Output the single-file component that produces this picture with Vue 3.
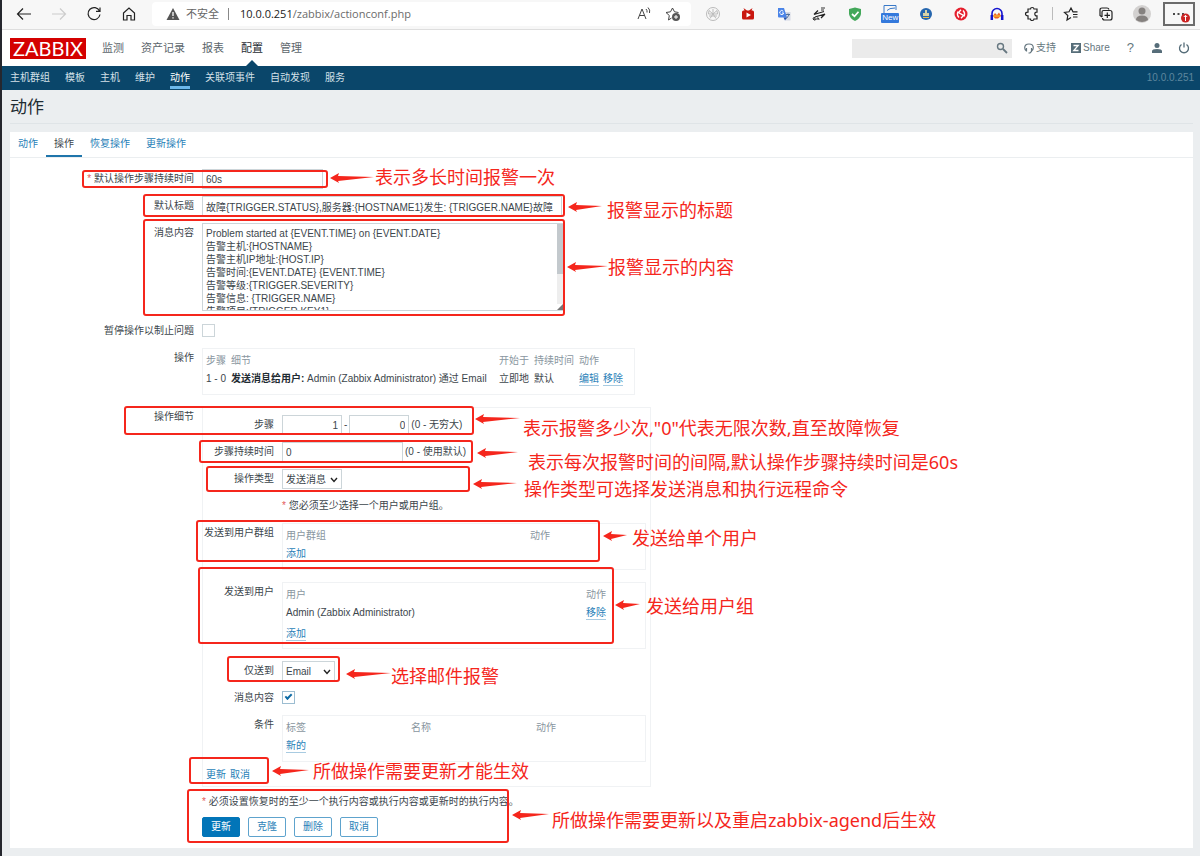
<template>
  <div class="page">
    <header class="browser">
      <div class="browser-nav">
        <button class="icon-btn" aria-label="back">
          <svg width="16" height="16" viewBox="0 0 16 16"><path d="M15 8H2M7 2.500L1.500 8L7 13.500" /></svg>
        </button>
        <button class="icon-btn faded" aria-label="forward">
          <svg width="16" height="16" viewBox="0 0 16 16"><path d="M1 8H14M9 2.500L14.500 8L9 13.500" /></svg>
        </button>
        <button class="icon-btn" aria-label="reload">
          <svg width="16" height="16" viewBox="0 0 16 16"><path d="M13.500 5A6 6 0 1 0 14 8.500M14 1.500V5.300H10" /></svg>
        </button>
        <button class="icon-btn" aria-label="home">
          <svg width="16" height="16" viewBox="0 0 16 16"><path d="M2.500 7L8 2L13.500 7V14H10V9.500H6V14H2.500Z" /></svg>
        </button>
      </div>
      <div class="address">
        <svg class="warn" width="14" height="14" viewBox="0 0 14 14">
          <path d="M7 1L13.500 13H.5Z" fill="#555" />
          <path d="M7 5V9M7 10.300V11.600" stroke="#fff" stroke-width="1.300" />
        </svg>
        <span class="insecure">不安全</span>
        <span class="address-sep"></span>
        <span class="url"><b>10.0.0.251</b>/zabbix/actionconf.php</span>
        <svg class="aloud" width="16" height="16" viewBox="0 0 16 16"><path d="M2 13L6 3L10 13M3.500 9.500H8.500M10 3Q11.500 4.500 11 6.500M12 1.500Q14.500 4 13.500 7" /></svg>
        <svg width="16" height="16" viewBox="0 0 16 16">
          <path d="M6.500 12L3.500 14L4.300 9.500L1 6.500L5.500 5.800L7.500 2L9.500 5.800L13.500 6.500" />
          <circle cx="11" cy="11" r="4" fill="#555" stroke="none" />
          <path d="M11 9V13M9 11H13" stroke="#fff" />
        </svg>
      </div>
      <div class="extensions">
        <svg width="16" height="16" viewBox="0 0 16 16" class="pale"><circle cx="8" cy="8" r="6.500" /><path d="M8 8L4 4.500L3.500 8ZM8 8L12 4.500L12.500 8ZM8 8L5 12.500M8 8L11 12.500M8 8V3M4 10H12" /></svg>
        <svg width="16" height="16" viewBox="0 0 16 16"><path d="M3.500 2L7 4.500H9L12.500 2L11.500 4.500H12.500Q14 4.500 14 6V12Q14 13.500 12.500 13.500H3.500Q2 13.500 2 12V6Q2 4.500 3.500 4.500H4.500Z" fill="#c9170f" stroke="none" /><path d="M6.500 6.500L11 9L6.500 11.500Z" fill="#fff" stroke="none" /></svg>
        <svg width="16" height="16" viewBox="0 0 16 16"><path d="M7 6H14.500V14.500H9Z" fill="#d5dae5" stroke="none" /><path d="M2 2H8L11 11.500H3Q2 11.500 2 10.500Z" fill="#4a84e8" stroke="none" /><path d="M7.500 11.500H11L9 14.500Z" fill="#2453ae" stroke="none" /><path d="M7.300 5.300A2 2 0 1 0 7.700 7H6" stroke="#fff" /><path d="M10 8.500H14M12 7.500V8.500M10.500 12.500L13 9" stroke="#52729d" /></svg>
        <svg width="16" height="16" viewBox="0 0 16 16"><path d="M3 8.500L13 5.500M3 8.500L7 4.500M14 8L4 11M14 8L10 12" stroke="#222" stroke-width="1.300" /><path d="M2 13.500Q5 13.500 4 11.500Q2 11 2 13Q3 15 5 13.500M6 14V12Q8 11 8 14M10 2H14M10 4H13" stroke="#333" /></svg>
        <svg width="16" height="16" viewBox="0 0 16 16"><path d="M8 1.500L14 3V8Q13 13 8 15Q3 13 2 8V3Z" fill="#43a85a" stroke="none" /><path d="M5 8L7.500 10.300L11.500 5.800" stroke="#fff" stroke-width="1.700" /></svg>
        <span class="ext-new">
          <svg width="16" height="9" viewBox="0 0 16 9"><path d="M2 9V1.500H14V6M5 6.500Q7 4 13 4" stroke="#3979c8" /></svg>
          <em>New</em>
        </span>
        <svg width="16" height="16" viewBox="0 0 16 16"><circle cx="8" cy="8" r="6" fill="#2666ae" stroke="none" /><path d="M7 4H9V7H11V10H5V7H7Z" fill="#d8d3a8" stroke="none" /><path d="M5 11.500H11" stroke="#f1bd45" /></svg>
        <svg width="16" height="16" viewBox="0 0 16 16"><circle cx="8" cy="8" r="6.500" fill="#e5202e" stroke="none" /><path d="M8 3.800L5.500 6.500L10.500 9.500L8 12.200M5 5.500Q3.500 9 6 11.500M11 10.500Q12.500 7 10 4.500" stroke="#fff" stroke-width="1.400" /></svg>
        <svg width="16" height="16" viewBox="0 0 16 16"><path d="M3 10V7.500A5 5 0 0 1 13 7.500V10" stroke="#1414cf" stroke-width="1.600" /><path d="M4 10L6 7L8 9L10 6.500L12 10L9 12.500H6Z" fill="#ec651e" stroke="none" /><path d="M4.500 10H11.500" stroke="#ffd53d" /><path d="M2.800 9V14M13.200 9V14" stroke="#1414cf" stroke-width="2.500" /></svg>
        <svg width="16" height="16" viewBox="0 0 16 16" class="dark"><path d="M4 3H6.500Q6.500 1.500 8.200 1.500T10 3H13V6.200Q10.800 6 10.800 8T13 9.800V13H10Q10 14.500 8.200 14.500T6.500 13H4V9.800Q1.500 9.800 1.500 8T4 6.200Z" /></svg>
      </div>
      <div class="browser-tools">
        <svg class="dark" width="16" height="16" viewBox="0 0 16 16"><path d="M8 11.500L4 14L4.800 9.500L1.500 6.500L6 5.800L8 2L10 5.800H14.500M10 8.500H14.500M10 11H14.500" /></svg>
        <svg class="dark" width="16" height="16" viewBox="0 0 16 16"><path d="M4 11L2 9.500V4Q2 2 4 2H9Q10.500 2 11 3.500M4 11V6Q4 4.500 5.500 4.500H12Q14 4.500 14 6.500V12Q14 14 12 14H6.500Q4.500 14 4.500 12M9.300 6.500V12M6.500 9.300H12" /></svg>
        <svg width="18" height="18" viewBox="0 0 18 18"><circle cx="9" cy="9" r="9" fill="#d3d1d0" stroke="none" /><circle cx="9" cy="6" r="3.500" fill="#85817f" stroke="none" /><path d="M3 15Q3 10.500 9 10.500T15 15Q9 19 3 15Z" fill="#85817f" stroke="none" /></svg>
        <button class="more" aria-label="more">
          <svg width="28" height="20" viewBox="0 0 28 20"><path d="M8 10H10M12.500 10H14.500M17 10H19" stroke="#111" stroke-width="1.700" /><circle cx="20.500" cy="14" r="4.500" fill="#cc2424" stroke="none" /><path d="M20.500 17V11.500M18.800 13L20.500 11.300L22.200 13" stroke="#fff" /></svg>
        </button>
      </div>
    </header>

    <div class="top">
      <a href="#" class="logo">ZABBIX</a>
      <nav class="main-menu">
        <a v-for="item in mainMenu" :key="item" href="#" :class="{ active: item === '配置' }">{{ item }}</a>
      </nav>
      <div class="top-right">
        <div class="search">
          <input v-model="search" type="text" aria-label="search">
          <svg width="12" height="12" viewBox="0 0 12 12"><circle cx="4.500" cy="4.500" r="3" stroke="#667780" stroke-width="1.400" /><path d="M7 7L11 11" stroke="#667780" stroke-width="1.800" /></svg>
        </div>
        <a href="#" class="support">
          <svg width="10" height="11" viewBox="0 0 10 11"><path d="M2.500 8Q.7 7 .7 4.800Q.7 1 5 1T9.300 4.800Q9.300 7 7.500 8M2.500 5V8.500M7.500 5V8.500L6 10H4.500" stroke="#667780" stroke-width="1.200" /></svg>支持</a>
        <a href="#" class="share">
          <svg width="10" height="10" viewBox="0 0 10 10"><path d="M0 0H10V10H0Z" fill="#566d79" stroke="none" /><path d="M2.500 2.500H7.200L2.800 7.500H7.500" stroke="#fff" stroke-width="1.300" /></svg>Share</a>
        <a href="#" class="help">?</a>
        <a href="#" aria-label="profile"><svg width="12" height="12" viewBox="0 0 12 12"><circle cx="6" cy="3.500" r="2.500" fill="#566d79" stroke="none" /><path d="M1 11V9Q1 7 6 7T11 9V11Z" fill="#566d79" stroke="none" /></svg></a>
        <a href="#" aria-label="logout"><svg width="12" height="12" viewBox="0 0 12 12"><path d="M3.500 2.500A4.500 4.500 0 1 0 8.500 2.500M6 .5V5.500" stroke="#566d79" stroke-width="1.300" /></svg></a>
      </div>
    </div>

    <nav class="sub-menu">
      <a v-for="item in subMenu" :key="item" href="#" :class="{ active: item === '动作' }">{{ item }}</a>
      <span class="server">10.0.0.251</span>
    </nav>

    <h1>动作</h1>

    <main class="panel">
      <div class="tabs">
        <a v-for="item in tabs" :key="item" href="#" :class="{ active: item === tab }" @click.prevent="tab = item">{{ item }}</a>
      </div>

      <form class="form" @submit.prevent>
        <div class="row">
          <label for="period"><i>*</i> 默认操作步骤持续时间</label>
          <input id="period" v-model="form.period" type="text" class="w-small">
        </div>
        <div class="row">
          <label for="subject">默认标题</label>
          <input id="subject" v-model="form.subject" type="text" class="w-big">
        </div>
        <div class="row row-message">
          <label for="message">消息内容</label>
          <div class="message">
            <textarea id="message" v-model="form.message"></textarea>
            <span class="scroll"></span>
          </div>
        </div>
        <div class="row">
          <label for="pause">暂停操作以制止问题</label>
          <input id="pause" v-model="form.pause" type="checkbox">
        </div>
        <div class="row spaced">
          <span class="label">操作</span>
          <div class="table-box operations">
            <table>
              <thead>
                <tr><th class="c-step">步骤</th><th class="c-detail">细节</th><th class="c-start">开始于</th><th class="c-duration">持续时间</th><th>动作</th></tr>
              </thead>
              <tbody>
                <tr>
                  <td>1 - 0</td>
                  <td><b>发送消息给用户:</b> Admin (Zabbix Administrator) 通过 Email</td>
                  <td>立即地</td>
                  <td>默认</td>
                  <td class="links"><a href="#">编辑</a><a href="#">移除</a></td>
                </tr>
              </tbody>
            </table>
          </div>
        </div>

        <div class="row">
          <span class="label">操作细节</span>
          <div class="details">
            <div class="row">
              <label for="step-from">步骤</label>
              <div class="inline">
                <input id="step-from" v-model="form.from" type="text" class="w-step">
                <span>-</span>
                <input v-model="form.to" type="text" class="w-step" aria-label="步骤">
                <span>(0 - 无穷大)</span>
              </div>
            </div>
            <div class="row">
              <label for="step-duration">步骤持续时间</label>
              <div class="inline">
                <input id="step-duration" v-model="form.duration" type="text" class="w-small">
                <span>(0 - 使用默认)</span>
              </div>
            </div>
            <div class="row">
              <label for="type">操作类型</label>
              <div class="select w-type">
                <select id="type" v-model="form.type">
                  <option>发送消息</option>
                </select>
                <svg width="8" height="6" viewBox="0 0 8 6"><path d="M1 1L4 4.500L7 1" stroke="#222" stroke-width="1.400" /></svg>
              </div>
            </div>
            <div class="row">
              <span></span>
              <p class="hint"><i>*</i> 您必须至少选择一个用户或用户组。</p>
            </div>
            <div class="row spaced">
              <span class="label">发送到用户群组</span>
              <div class="table-box">
                <table>
                  <thead><tr><th class="c-group">用户群组</th><th>动作</th></tr></thead>
                  <tbody><tr><td colspan="2" class="links"><a href="#">添加</a></td></tr></tbody>
                </table>
              </div>
            </div>
            <div class="row spaced">
              <span class="label">发送到用户</span>
              <div class="table-box">
                <table>
                  <thead><tr><th class="c-user">用户</th><th>动作</th></tr></thead>
                  <tbody>
                    <tr><td>Admin (Zabbix Administrator)</td><td class="links"><a href="#">移除</a></td></tr>
                    <tr class="add-row"><td colspan="2" class="links"><a href="#">添加</a></td></tr>
                  </tbody>
                </table>
              </div>
            </div>
            <div class="row">
              <label for="media">仅送到</label>
              <div class="select w-media">
                <select id="media" v-model="form.media">
                  <option>Email</option>
                </select>
                <svg width="8" height="6" viewBox="0 0 8 6"><path d="M1 1L4 4.500L7 1" stroke="#222" stroke-width="1.400" /></svg>
              </div>
            </div>
            <div class="row">
              <label for="default-message">消息内容</label>
              <input id="default-message" v-model="form.defaultMessage" type="checkbox">
            </div>
            <div class="row">
              <span class="label">条件</span>
              <div class="table-box">
                <table>
                  <thead><tr><th class="c-condition">标签</th><th class="c-condition">名称</th><th>动作</th></tr></thead>
                  <tbody><tr><td colspan="3" class="links"><a href="#">新的</a></td></tr></tbody>
                </table>
              </div>
            </div>
            <div class="details-actions"><a href="#">更新</a><a href="#">取消</a></div>
          </div>
        </div>

        <div class="form-footer">
          <p class="hint"><i>*</i> 必须设置恢复时的至少一个执行内容或执行内容或更新时的执行内容。</p>
          <div class="buttons">
            <button type="submit" class="primary">更新</button>
            <button type="button">克隆</button>
            <button type="button">删除</button>
            <button type="button">取消</button>
          </div>
        </div>
      </form>
    </main>

    <!-- red notes drawn over the form -->
    <svg class="notes">
      <g v-for="note in notes" :key="note.text">
        <rect :x="note.box[0]" :y="note.box[1]" :width="note.box[2] - note.box[0]" :height="note.box[3] - note.box[1]" rx="2" />
        <path :d="arrow(note.arrow)" />
        <text :x="note.at[0]" :y="note.at[1]">{{ note.text }}</text>
      </g>
    </svg>
  </div>
</template>

<script setup>
import { ref } from 'vue';

const mainMenu = ['监测', '资产记录', '报表', '配置', '管理'];
const subMenu = ['主机群组', '模板', '主机', '维护', '动作', '关联项事件', '自动发现', '服务'];
const tabs = ['动作', '操作', '恢复操作', '更新操作'];

const tab = ref('操作');
const search = ref('');

const form = ref({
  period: '60s',
  subject: '故障{TRIGGER.STATUS},服务器:{HOSTNAME1}发生: {TRIGGER.NAME}故障',
  message: [
    'Problem started at {EVENT.TIME} on {EVENT.DATE}',
    '告警主机:{HOSTNAME}',
    '告警主机IP地址:{HOST.IP}',
    '告警时间:{EVENT.DATE} {EVENT.TIME}',
    '告警等级:{TRIGGER.SEVERITY}',
    '告警信息: {TRIGGER.NAME}',
    '告警项目:{TRIGGER.KEY1}'
  ].join('\n'),
  pause: false,
  from: '1',
  to: '0',
  duration: '0',
  type: '发送消息',
  media: 'Email',
  defaultMessage: true
});

// box: left, top, right, bottom; arrow: tip x, tip y, tail x
const notes = [
  { box: [83, 171, 327, 187], arrow: [330, 178, 374], at: [375, 184], text: '表示多长时间报警一次' },
  { box: [144, 195, 564, 216], arrow: [568, 207, 602], at: [607, 217], text: '报警显示的标题' },
  { box: [144, 220, 564, 315], arrow: [567, 267, 608], at: [608, 274], text: '报警显示的内容' },
  { box: [125, 407, 473, 434], arrow: [475, 419, 520], at: [523, 435], text: '表示报警多少次,"0"代表无限次数,直至故障恢复' },
  { box: [200, 441, 472, 462], arrow: [477, 453, 518], at: [528, 469], text: '表示每次报警时间的间隔,默认操作步骤持续时间是60s' },
  { box: [207, 467, 469, 491], arrow: [473, 484, 517], at: [524, 496], text: '操作类型可选择发送消息和执行远程命令' },
  { box: [197, 521, 599, 561], arrow: [603, 536, 627], at: [632, 545], text: '发送给单个用户' },
  { box: [199, 568, 613, 643], arrow: [615, 605, 640], at: [646, 613], text: '发送给用户组' },
  { box: [228, 657, 339, 681], arrow: [346, 674, 391], at: [391, 683], text: '选择邮件报警' },
  { box: [190, 758, 268, 783], arrow: [272, 771, 309], at: [313, 778], text: '所做操作需要更新才能生效' },
  { box: [188, 790, 508, 842], arrow: [512, 815, 549], at: [552, 827], text: '所做操作需要更新以及重启zabbix-agend后生效' }
];

function arrow([x, y, tail]) {
  return `M${x} ${y}L${x + 9} ${y - 5}L${x + 8} ${y - 2}L${tail} ${y - 1}L${x + 8} ${y + 3}L${x + 9} ${y + 5}Z`;
}
</script>

<style>
body {
  margin: 0;
  background: #ebeef0;
}
</style>

<style scoped>
* {
  box-sizing: border-box;
}

.page {
  position: relative;
  min-height: 100vh;
  padding-bottom: 8px;
  background: #ebeef0;
  color: #3c464c;
  font-family: "Liberation Sans", "Noto Sans CJK SC", sans-serif;
  font-size: 10px;
  line-height: 20px;
}

.page::before {
  content: "";
  position: absolute;
  top: 0;
  bottom: 0;
  left: 0;
  width: 2px;
  background: #25272e;
  z-index: 1;
}

a {
  color: #2a7fb8;
  text-decoration: none;
}

svg {
  display: block;
  flex: none;
  fill: none;
  stroke: #444;
}

i {
  color: #e45959;
  font-style: normal;
}

input,
textarea,
select,
button {
  margin: 0;
  font-family: inherit;
  font-size: 10px;
  color: inherit;
}

/* browser bar */
.browser {
  display: flex;
  align-items: center;
  height: 30px;
  padding: 0 5px 2px 16px;
  background: #f7f7f7;
  border-bottom: 1px solid #dedede;
}

.browser-nav {
  display: flex;
  gap: 19px;
  margin-right: 15px;
}

.icon-btn {
  padding: 0;
  border: none;
  background: none;
}

.icon-btn svg {
  stroke: #222;
  stroke-width: 1.200;
}

.icon-btn.faded svg {
  stroke: #ccc;
}

.dark {
  stroke: #222;
  stroke-width: 1.200;
}

.pale {
  stroke: #bbb;
}

.address {
  flex: 1;
  display: flex;
  align-items: center;
  height: 24px;
  padding: 0 10px 0 14px;
  background: #fff;
  border-radius: 4px;
}

.warn {
  stroke: none;
}

.insecure {
  margin-left: 6px;
  font-size: 11px;
  color: #666;
}

.address-sep {
  width: 1px;
  height: 12px;
  margin: 0 11px 0 9px;
  background: #888;
}

.url {
  flex: 1;
  color: #6b6b6b;
  font-family: "Open Sans", "Noto Sans", sans-serif;
  font-size: 11px;
}

.url b {
  color: #222;
  font-weight: normal;
}

.aloud {
  margin-right: 13px;
}

.extensions {
  display: flex;
  align-items: center;
  justify-content: space-between;
  width: 335px;
  margin-left: 14px;
}

.ext-new {
  display: flex;
  flex-direction: column;
  align-items: center;
  width: 16px;
}

.ext-new em {
  padding: 0 1px;
  background: #3479dc;
  border-radius: 1px;
  color: #fff;
  font-size: 8px;
  font-style: normal;
  line-height: 10px;
}

.browser-tools {
  display: flex;
  align-items: center;
  margin-left: 12px;
  padding-left: 11px;
  gap: 19px;
  background: linear-gradient(#bbb, #bbb) left center / 1px 13px no-repeat;
}

.more {
  width: 32px;
  height: 24px;
  margin-left: -7px;
  padding: 0;
  background: none;
  border: 2px solid #6b6b6b;
}

/* zabbix header */
.top {
  display: flex;
  align-items: center;
  height: 36px;
  padding: 0 10px;
  background: #fff;
}

.logo {
  width: 76px;
  height: 21px;
  background: #d40000;
  color: #fff;
  font-family: Lato, "Liberation Sans", sans-serif;
  font-size: 20px;
  line-height: 21px;
  text-align: center;
}

.main-menu {
  display: flex;
  gap: 17px;
  margin-left: 16px;
  font-size: 11px;
  line-height: 36px;
}

.main-menu a {
  position: relative;
  color: #5c666c;
}

.main-menu .active {
  color: #1f2c33;
}

.main-menu .active::after {
  content: "";
  position: absolute;
  bottom: 0;
  left: 50%;
  margin-left: -6px;
  border: 6px solid transparent;
  border-top: none;
  border-bottom-color: #0a466a;
}

.top-right {
  display: flex;
  align-items: center;
  gap: 15px;
  margin-left: auto;
}

.top-right a {
  display: flex;
  align-items: center;
  gap: 2px;
  color: #667780;
}

.search {
  display: flex;
  align-items: center;
  width: 160px;
  height: 19px;
  margin-right: -3px;
  padding-right: 4px;
  background: #ebebeb;
}

.search input {
  flex: 1;
  min-width: 0;
  height: 19px;
}

.top-right .help {
  margin: 0 2px;
  font-size: 13px;
}

.sub-menu {
  display: flex;
  gap: 15px;
  height: 24px;
  padding: 0 6px 0 10px;
  background: #0a466a;
  line-height: 23px;
}

.sub-menu a {
  height: 23px;
  color: #d3e0e8;
}

.sub-menu .active {
  color: #fff;
  border-bottom: 3px solid #6cb8ea;
}

.server {
  margin-left: auto;
  color: #5e879e;
}

h1 {
  height: 34px;
  margin: 0 7px 8px 10px;
  border-bottom: 1px solid #dfe4e7;
  color: #1f2c33;
  font-size: 17px;
  font-weight: normal;
  line-height: 36px;
}

.panel {
  margin: 0 7px 0 10px;
  background: #fff;
}

.tabs {
  display: flex;
  height: 26px;
  border-bottom: 1px solid #ebeef0;
  line-height: 24px;
}

.tabs a {
  height: 25px;
  padding: 0 8px;
}

.tabs .active {
  color: #3c464c;
  border-bottom: 2px solid #1f75ab;
}

/* form */
.form {
  display: flex;
  flex-direction: column;
  gap: 7px;
  padding: 11px 0;
}

.row {
  display: grid;
  grid-template-columns: 184px 1fr;
  column-gap: 8px;
  align-items: start;
  justify-items: start;
  min-height: 20px;
}

.row > label,
.row > .label {
  justify-self: end;
  white-space: nowrap;
}

.row-message {
  min-height: 91px;
}

.spaced {
  padding-bottom: 5px;
}

input[type="text"],
textarea {
  padding: 0 3px;
  border: 1px solid #ccd5d9;
  background: #fff;
}

.form input[type="text"] {
  height: 20px;
}

.search input[type="text"] {
  border: none;
  background: none;
}

.w-small {
  width: 121px;
}

.w-big {
  width: 360px;
}

.message {
  position: relative;
}

textarea {
  display: block;
  width: 361px;
  height: 88px;
  padding: 3px;
  line-height: 13px;
  overflow: hidden;
  resize: none;
}

.scroll {
  position: absolute;
  top: 1px;
  right: 0;
  bottom: 1px;
  width: 6px;
  background: linear-gradient(#c3c9cd, #c3c9cd) top / 6px 50px no-repeat #eee;
  pointer-events: none;
}

.scroll::after {
  content: "";
  position: absolute;
  right: 0;
  bottom: 0;
  border: 3px solid #fff;
  border-right-color: #777;
  border-bottom-color: #777;
}

input[type="checkbox"] {
  appearance: none;
  position: relative;
  width: 13px;
  height: 13px;
  margin-top: 3px;
  border: 1px solid #ccd5d9;
  background: #fff;
}

input[type="checkbox"]:checked {
  border-color: #9cbdd1;
}

input[type="checkbox"]:checked::after {
  content: "";
  position: absolute;
  top: 2px;
  left: 2px;
  width: 5px;
  height: 2px;
  border-left: 2px solid #0f6ba5;
  border-bottom: 2px solid #0f6ba5;
  transform: rotate(-45deg);
}

.table-box {
  width: 100%;
  padding: 3px 3px 6px;
  border: 1px solid #f0f2f4;
}

.operations {
  width: 433px;
}

table {
  width: 100%;
  table-layout: fixed;
  border-collapse: collapse;
}

th,
td {
  height: 18px;
  padding: 0;
  line-height: 18px;
  text-align: left;
  white-space: nowrap;
}

th {
  color: #8996a0;
  font-weight: normal;
}

td b {
  color: #1f2c33;
}

.c-step {
  width: 25px;
}

.c-detail {
  width: 268px;
}

.c-start {
  width: 35px;
}

.c-duration {
  width: 45px;
}

.c-group {
  width: 244px;
}

.c-user {
  width: 300px;
}

.c-condition {
  width: 125px;
}

.add-row td {
  height: 20px;
  padding-top: 4px;
  line-height: 16px;
}

.links a {
  display: inline-block;
  margin-right: 4px;
  border-bottom: 1px solid #a8cbe1;
  line-height: 13px;
}

.details {
  display: flex;
  flex-direction: column;
  gap: 7px;
  width: 449px;
  padding: 7px 4px 5px 0;
  border: 1px solid #f0f2f4;
}

.details .row {
  grid-template-columns: 71px 1fr;
}

.inline {
  display: flex;
  gap: 2px;
}

.w-step {
  width: 60px;
  text-align: right;
}

.select {
  position: relative;
  display: flex;
}

.select select {
  width: 100%;
  height: 20px;
  padding: 0 3px;
  appearance: none;
  background: #fff;
  border: 1px solid #ccd5d9;
  border-radius: 0;
}

.select svg {
  position: absolute;
  top: 8px;
  right: 4px;
  pointer-events: none;
}

.w-type {
  width: 60px;
}

.w-media {
  width: 53px;
}

.hint {
  margin: 0;
}

.details-actions {
  display: flex;
  gap: 4px;
  padding-left: 3px;
  line-height: 12px;
}

.form-footer {
  display: flex;
  flex-direction: column;
  gap: 7px;
  padding-left: 192px;
  line-height: 16px;
}

.buttons {
  display: flex;
  gap: 8px;
}

.buttons button {
  height: 20px;
  padding: 0 8px;
  border: 1px solid #5ea3cd;
  border-radius: 2px;
  background: #fff;
  color: #2a7fb8;
  line-height: 16px;
  cursor: pointer;
}

.buttons .primary {
  border-color: #0275b8;
  background: #0275b8;
  color: #fff;
}

.notes {
  position: absolute;
  top: 0;
  left: 0;
  width: 100%;
  height: 100%;
  pointer-events: none;
}

.notes rect {
  stroke: #f5261c;
  stroke-width: 2;
}

.notes path {
  fill: #f5261c;
  stroke: none;
}

.notes text {
  fill: #f5261c;
  stroke: none;
  font-family: "Noto Sans", "Noto Sans CJK SC", sans-serif;
  font-size: 18px;
}
</style>
